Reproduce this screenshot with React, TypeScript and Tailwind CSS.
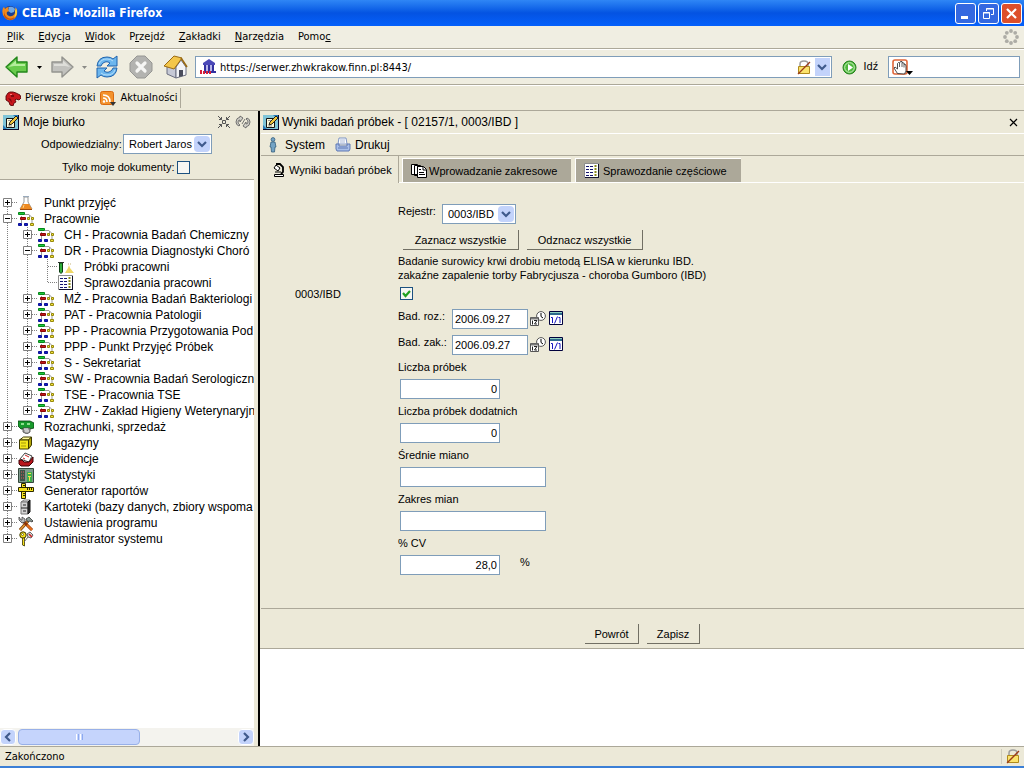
import { useState, type ReactNode } from "react";

interface TreeItem {
  label: string;
  icon: () => ReactNode;
  level: number;
  box?: "plus" | "minus";
  last?: boolean;
  first?: boolean;
}

/* ---------- window and toolbar icons ---------- */

function FirefoxIcon() {
  return (
    <svg width="16" height="16" viewBox="0 0 16 16" aria-hidden="true">
      <circle cx="8" cy="8" r="7" fill="#1c3f8f" />
      <path d="M7 2q4-1 6 2l-1 3-3 1-3-2z" fill="#6fa8e8" />
      <path d="M1 3Q-1 9 3 13q4 4 9 1 4-3 3-9-1-2-2-3 1 3 0 6-2 4-6 3-3-1-2-4l2-1-1-2 1-2Q4 2 3 4L2 2z" fill="#f08a1d" />
      <path d="M2 5q0 6 4 8 5 2 8-3-1 4-5 5-5 0-7-4z" fill="#c7500e" />
      <path d="M14 3q2 4 0 8l-2 2q2-4 1-7z" fill="#f9cf3a" />
    </svg>
  );
}

function ArrowIcon({ back }: { back?: boolean }) {
  return back ? (
    <svg width="24" height="22" viewBox="0 0 24 22" aria-hidden="true">
      <path d="M1 11 12 1v5h10v10H12v5z" fill="#69cb4c" stroke="#23871b" strokeWidth="1.4" strokeLinejoin="round" />
      <path d="M3.500 11 11 4.500V8h9v2H9z" fill="#b4ee9c" />
    </svg>
  ) : (
    <svg width="24" height="22" viewBox="0 0 24 22" aria-hidden="true">
      <path d="M23 11 12 1v5H2v10h10v5z" fill="#c2c2be" stroke="#94948f" strokeWidth="1.4" strokeLinejoin="round" />
      <path d="M20 11 13 4.500V8H4v2h11z" fill="#deded9" />
    </svg>
  );
}

function ReloadIcon() {
  return (
    <svg width="24" height="24" viewBox="0 0 24 24" aria-hidden="true">
      <path d="M2 11Q3 2 12 2q4 0 6 2l4-3v10H12l3-3q-4-3-8 1l-1 2z" fill="#6cb6ee" stroke="#1f63ad" strokeLinejoin="round" />
      <path d="M22 13q-1 9-10 9-4 0-6-2l-4 3V13h10l-3 3q4 3 8-1l1-2z" fill="#6cb6ee" stroke="#1f63ad" strokeLinejoin="round" />
      <path d="M4 9q2-5 8-5 4 0 6 2M20 15q-2 5-8 5-4 0-6-2" fill="none" stroke="#b5defa" />
    </svg>
  );
}

function StopIcon() {
  return (
    <svg width="24" height="24" viewBox="0 0 24 24" aria-hidden="true">
      <path d="M8 1h8l7 7v8l-7 7H8l-7-7V8z" fill="#b3b3b0" stroke="#969693" strokeLinejoin="round" />
      <path d="m8 8 8 8m0-8-8 8" stroke="#f6f6f4" strokeWidth="3.200" strokeLinecap="round" />
    </svg>
  );
}

function HomeIcon() {
  return (
    <svg width="25" height="24" viewBox="0 0 25 24" aria-hidden="true">
      <path d="M4 11v8l9 4V12L8 7z" fill="#c6c9d6" stroke="#6b6e80" />
      <path d="M13 23V12l5-7 5 7v8z" fill="#f3f4f8" stroke="#6b6e80" />
      <path d="M1 11 11 1l8 2-8 11z" fill="#f3c64a" stroke="#9a6a13" strokeLinejoin="round" />
      <path d="m18 3 6 9" stroke="#9a6a13" strokeWidth="1.600" />
      <path d="M16 15h4v6l-4 1z" fill="#4a4d5c" />
    </svg>
  );
}

function SiteIcon() {
  return (
    <svg width="16" height="16" viewBox="0 0 16 16" aria-hidden="true">
      <path d="M3 4 9 0l6 4v2H3z" fill="#4a48b8" />
      <path d="M4 6h2v7H4zM8 6h2v7H8zM12 6h2v7h-2z" fill="#3331a0" />
      <path d="M6 6h2v7H6zM10 6h2v7h-2z" fill="#b8b5ea" />
      <path d="M3 12h13v2H3z" fill="#3331a0" />
      <path d="M0 11h2v4H0zM3 12h2v3H3zM6 12h2v3H6zM9 12h2v3H9z" fill="#d8203a" />
    </svg>
  );
}

function LockIcon() {
  return (
    <svg width="14" height="15" viewBox="0 0 14 15" aria-hidden="true">
      <path d="M3 6V4q0-3 4-3t4 3v3" fill="none" stroke="#9c9c9c" strokeWidth="1.500" />
      <path d="M1.500 6.500h11v7h-11z" fill="#fbe36c" stroke="#b08a1c" />
      <path d="M1 14 13 2" stroke="#9c3a1a" strokeWidth="1.300" />
    </svg>
  );
}

function GoIcon() {
  return (
    <svg width="15" height="15" viewBox="0 0 15 15" aria-hidden="true">
      <circle cx="7.500" cy="7.500" r="6.500" fill="#4fb83c" stroke="#23801c" />
      <circle cx="7.500" cy="7.500" r="4.800" fill="none" stroke="#c9f0bd" />
      <path d="m6 4 5 3.500L6 11z" fill="#fff" />
    </svg>
  );
}

function HandIcon() {
  return (
    <svg width="21" height="17" viewBox="0 0 21 17" aria-hidden="true">
      <rect x="1" y="1" width="14" height="14" rx="2" fill="#fff" stroke="#e0673a" strokeWidth="1.600" />
      <path d="M5.500 14.500 2 9l1-1 2.500 2V4.500l1-1 1 .5 1-1.500 1.500 0 .5 1.500 1.500 0 .5 1.500 1 0 .5 1.500v5l-1.500 3z" fill="#fff" stroke="#222" strokeWidth=".8" />
      <path d="M7.500 4v4M10 3.500v4.500M12 5v3.500" stroke="#222" strokeWidth=".7" />
      <path d="M14 12h7l-3.500 4z" fill="#000" />
    </svg>
  );
}

function ThrobberIcon() {
  return (
    <svg width="16" height="16" viewBox="0 0 16 16" fill="#adaca6" aria-hidden="true">
      <circle cx="8" cy="2" r="1.900" />
      <circle cx="12.200" cy="3.800" r="1.900" />
      <circle cx="14" cy="8" r="1.900" />
      <circle cx="12.200" cy="12.200" r="1.900" />
      <circle cx="8" cy="14" r="1.900" />
      <circle cx="3.800" cy="12.200" r="1.900" />
      <circle cx="2" cy="8" r="1.900" />
      <circle cx="3.800" cy="3.800" r="1.900" />
    </svg>
  );
}

function DinoIcon() {
  return (
    <svg width="16" height="15" viewBox="0 0 16 15" aria-hidden="true">
      <path d="M1 5 3 2l2-1 3 0 3 1 4 2 1 3-2 2-3-1-1 1 1 2-2 1-1 3-3-1-1-3-3-2z" fill="#c8151b" stroke="#5a0508" strokeWidth=".9" />
      <path d="M6 4h3v2H6zM3 7l3 1 1 4" fill="#7d0a0e" />
      <path d="M5 3h2v1H5z" fill="#f77" />
    </svg>
  );
}

function FeedIcon() {
  return (
    <svg width="17" height="15" viewBox="0 0 17 15" aria-hidden="true">
      <rect x=".5" y=".5" width="13" height="13" rx="2" fill="#f3922c" stroke="#d9690f" />
      <path d="M3 7q4 0 4 4M3 4q7 0 7 7" fill="none" stroke="#fff" strokeWidth="1.600" />
      <circle cx="4" cy="10.500" r="1.200" fill="#fff" />
      <path d="M10 11h6l-3 4z" fill="#333" />
    </svg>
  );
}

function Caret({ muted }: { muted?: boolean }) {
  return (
    <svg width="5" height="3" viewBox="0 0 5 3" aria-hidden="true">
      <path d="M0 0h5L2.500 3z" fill={muted ? "#8a8a86" : "#000"} />
    </svg>
  );
}

function Chevron({ dir = "down" }: { dir?: "down" | "left" | "right" }) {
  const d = dir === "down" ? "m1 3 4 4 4-4" : dir === "left" ? "M7 1 3 5l4 4" : "m3 1 4 4-4 4";
  return (
    <svg width="10" height="10" viewBox="0 0 10 10" fill="none" aria-hidden="true">
      <path d={d} stroke="#3f5a8c" strokeWidth="2.200" />
    </svg>
  );
}

/* ---------- panel icons ---------- */

function NotepadIcon() {
  return (
    <svg width="16" height="16" viewBox="0 0 16 16" aria-hidden="true">
      <path d="M0 1h16v15H0z" fill="#7fc4d8" />
      <path d="M0 11v5h5zM10 1h6v5z" fill="#2478b8" />
      <path d="M15 1h1v15H0v-1h15z" fill="#0b0b2c" />
      <path d="M3.500 4.500h8v9h-8z" fill="#fdf8d8" stroke="#111" />
      <path d="M5 6.500h3M5 12h4" stroke="#999" />
      <path d="m6 11 1-3 6-6 2 2-6 6z" fill="#f2c63c" stroke="#111" strokeWidth=".9" />
    </svg>
  );
}

function CollapseIcon() {
  return (
    <svg width="14" height="14" viewBox="0 0 14 14" fill="none" stroke="#555" aria-hidden="true">
      <path d="M5.500 5.500h3v3h-3zM1 1l3.500 3.500M13 1 9.500 4.500M1 13l3.500-3.500M13 13 9.500 9.500" />
      <path d="M4.500 2v2.500H2M9.500 2v2.500H12M4.500 12V9.500H2M9.500 12V9.500H12" />
    </svg>
  );
}

function RefreshIcon() {
  return (
    <svg width="16" height="14" viewBox="0 0 16 14" fill="#d0cfc7" stroke="#666" strokeWidth=".9" aria-hidden="true">
      <path d="M8 3 5 1v1Q1 3 1 7q0 3 3 4l1-1Q3 9 3 7q0-2 2-2v2z" />
      <path d="m8 11 3 2v-1q4-1 4-5 0-3-3-4l-1 1q2 1 2 3 0 2-2 2V7z" />
      <path d="m7 9 3-5" />
    </svg>
  );
}

function PersonIcon() {
  return (
    <svg width="8" height="16" viewBox="0 0 8 16" fill="#74a3c4" stroke="#36607f" strokeWidth=".8" aria-hidden="true">
      <circle cx="4" cy="2.500" r="1.900" />
      <path d="M2 5h4l1 5H6l-.5 5h-3L2 10H1z" />
    </svg>
  );
}

function PrinterIcon() {
  return (
    <svg width="16" height="15" viewBox="0 0 16 15" aria-hidden="true">
      <path d="M4 1h7l1 6H3z" fill="#fff" stroke="#7d94c4" />
      <path d="M1 7h3v2h8V7h3v5l-1 2H2l-1-2z" fill="#a9bfe8" stroke="#5e79b4" />
      <path d="M3 11h10" stroke="#5e79b4" />
      <path d="M5 3h5M5 5h5" stroke="#a8b8d8" />
    </svg>
  );
}

function MicroscopeIcon() {
  return (
    <svg width="12" height="14" viewBox="0 0 12 14" aria-hidden="true">
      <path d="M1.500 11.500h9v2h-9z" fill="#fff" stroke="#000" />
      <path d="M3 1h4l3 3v5l-2 2" fill="none" stroke="#000" strokeWidth="1.800" />
      <path d="m3 2 4 3-2 3-4-3z" fill="#fff" stroke="#000" />
      <path d="M2 9h6" stroke="#000" />
    </svg>
  );
}

function PagesIcon() {
  return (
    <svg width="16" height="14" viewBox="0 0 16 14" fill="#fff" stroke="#000" aria-hidden="true">
      <path d="M.500.500h6v10h-6zM3.500 1.500h6v10h-6z" />
      <path d="M6.500 2.500h6l3 3v8h-9z" />
      <path d="M12 3v3h3M8 8.500h5M8 10.500h6M8 5.500h2" fill="none" />
    </svg>
  );
}

function SheetIcon() {
  return (
    <svg width="16" height="16" viewBox="0 0 16 16" aria-hidden="true">
      <path d="M.500.500h14v14H.500z" fill="#fff" stroke="#8d8d8d" />
      <path d="M14 1h1v14H1v-1h13z" fill="#14142c" />
      <path d="M2 3.500h3M6 3.500h3M2 6.500h3M6 6.500h3M2 9.500h3M6 9.500h3M2 12.500h3M6 12.500h3" stroke="#15156e" />
      <path d="M11.500 2v12" stroke="#8a8a1a" strokeWidth="2" strokeDasharray="2 1" />
    </svg>
  );
}

function TimeIcon() {
  return (
    <svg width="16" height="15" viewBox="0 0 16 15" aria-hidden="true">
      <circle cx="11" cy="5" r="4.400" fill="#fff" stroke="#555" />
      <path d="M11 2v3.500l2 1.500" fill="none" stroke="#000" />
      <path d="M.500 6.500h8v8h-8z" fill="#fff" stroke="#555" />
      <path d="M1 7.500h7" stroke="#777" strokeWidth="2" />
      <path d="M2.500 9.500v4M4 9.500h3l-2.500 3.500H7" fill="none" stroke="#222" />
    </svg>
  );
}

function CalendarIcon() {
  return (
    <svg width="14" height="14" viewBox="0 0 14 14" aria-hidden="true">
      <path d="M.500.500h13v13H.500z" fill="#fff" stroke="#00003c" />
      <path d="M1 1h12v3H1z" fill="#2d6a8c" />
      <path d="M1 1.500h12" stroke="#8fd0c0" />
      <path d="M2 6.500h1.500V12M9.500 6.500H11V12M8.500 5.500 5.500 12.500" fill="none" stroke="#1616c0" />
    </svg>
  );
}

/* ---------- tree icons ---------- */

function FlaskIcon() {
  return (
    <svg width="16" height="16" viewBox="0 0 16 16" aria-hidden="true">
      <path d="M6 2v5l-4 7h12l-4-7V2z" fill="#fff" stroke="#9a9a9a" />
      <path d="m5 9-3 5h12l-3-5z" fill="#ee8a22" />
      <path d="M2 14.500h12" stroke="#a04c0c" />
      <path d="M5 1.500h6" stroke="#9ab" />
      <path d="m6 10-1 3" stroke="#ffd48a" />
    </svg>
  );
}

function LabsIcon() {
  return (
    <svg width="16" height="14" viewBox="0 0 16 14" aria-hidden="true">
      <path d="M3.500 4v7M7 2.500h4l3 3v6M11.500 3v3" fill="none" stroke="#999" />
      <path d="M.500.500h6v2h-6z" fill="#1fc83c" stroke="#06871a" />
      <path d="M2.500 5.500h5v2h-5z" fill="#c01818" stroke="#8a0606" />
      <path d="M.500 11.500h3v2h-3zM6.500 11.500h3v2h-3z" fill="#1420c0" stroke="#0a0f98" />
      <path d="M9.500 5.500h2v2h-2zM13.500 5.500h2v2h-2zM12.500 11.500h3v2h-3z" fill="#f2e23c" stroke="#96880c" />
    </svg>
  );
}

function TubesIcon() {
  return (
    <svg width="16" height="13" viewBox="0 0 16 13" aria-hidden="true">
      <path d="M0 1.500h6" stroke="#333" />
      <path d="M1.500 2h3v9L3 12.500 1.500 11z" fill="#2fae3a" stroke="#0a3c10" />
      <path d="m11 4 1 3 4 5H7l3-5z" fill="#efd766" />
      <path d="M10 3h3" stroke="#c7b57a" strokeDasharray="1 1" />
    </svg>
  );
}

function MoneyIcon() {
  return (
    <svg width="16" height="14" viewBox="0 0 16 14" aria-hidden="true">
      <path d="M0 1h12l4 2v5l-4 1H3L0 6z" fill="#189a2c" stroke="#063c10" strokeWidth=".8" />
      <path d="M3 3h3v2H3zM9 3h3v2H9z" fill="#8ee08e" />
      <path d="M5 8h7v4l-3 2-4-2z" fill="#a5a5a5" stroke="#444" strokeWidth=".8" />
      <path d="M6 9h4M7 11h4" stroke="#f0f0f0" />
    </svg>
  );
}

function BoxIcon() {
  return (
    <svg width="16" height="14" viewBox="0 0 16 14" strokeLinejoin="round" stroke="#3d3a00" aria-hidden="true">
      <path d="m1.500 4 4-3h8l-3 3z" fill="#fff99a" />
      <path d="M1.500 4h9v9h-9z" fill="#f4e61c" />
      <path d="m10.500 4 3-3v8l-3 4z" fill="#b5a608" />
      <path d="M3 7h5M3 10h5" stroke="#a69806" />
    </svg>
  );
}

function RecordsIcon() {
  return (
    <svg width="16" height="15" viewBox="0 0 16 15" strokeLinejoin="round" aria-hidden="true">
      <path d="m2 7 5-6 7 3-3 6z" fill="#fff" stroke="#444" />
      <path d="m5 6 2 1m0-4 4 2" stroke="#c22" />
      <path d="m1 8 3 0 2 2h5l4-5v5l-4 4H3L1 12z" fill="#b8161c" stroke="#3c0306" />
    </svg>
  );
}

function StatsIcon() {
  return (
    <svg width="16" height="15" viewBox="0 0 16 15" aria-hidden="true">
      <path d="M.500.500h15v14H.500z" fill="#7e9a8c" stroke="#33483c" />
      <path d="M2 2h5v11H2z" fill="#3c5448" />
      <path d="M9 4h5v10H9z" fill="#3fae4c" />
      <path d="M3 4h1M5 4h1M3 7h1M5 7h1M3 10h1M5 10h1" stroke="#e05a5a" />
      <path d="M10 5.500h3M10 8.500h3M11.500 9v4" stroke="#f5e04c" />
    </svg>
  );
}

function RulerIcon() {
  return (
    <svg width="16" height="16" viewBox="0 0 16 16" aria-hidden="true">
      <path d="M3.500.500h4v15h-4z" fill="#f6e21c" stroke="#2b2800" />
      <path d="M.500 4.500h15v4H.500z" fill="#f6e21c" stroke="#2b2800" />
      <path d="M5 2.500h2M5 10.500h2M5 12.500h2M9.500 5v2M11.500 5v2M13.500 5v2" stroke="#2b2800" />
    </svg>
  );
}

function CabinetIcon() {
  return (
    <svg width="16" height="16" viewBox="0 0 16 16" strokeLinejoin="round" aria-hidden="true">
      <path d="m3 3 3-2h6l-2 2z" fill="#f2f2f2" stroke="#777" />
      <path d="M3 3h7v12H3z" fill="#d4d4d4" stroke="#777" />
      <path d="m10 3 2-2v12l-2 2z" fill="#333" stroke="#111" />
      <path d="M3 9h7M5 6h3M5 12h3" stroke="#222" />
    </svg>
  );
}

function ToolsIcon() {
  return (
    <svg width="16" height="15" viewBox="0 0 16 15" aria-hidden="true">
      <path d="m2 14 8-9" stroke="#7a3d08" strokeWidth="3" />
      <path d="m2 14 8-9" stroke="#e59a34" strokeWidth="1.500" />
      <path d="m5 5 9 9" stroke="#8c3408" strokeWidth="3" />
      <path d="m9 9 5 5" stroke="#e8701c" strokeWidth="1.800" />
      <path d="M1 1v3l3 3 3-1V3L4 1v3H3z" fill="#bcbcbc" stroke="#444" strokeWidth=".8" />
      <path d="m8 3 3-2 4 4-1 1-2-1-2 1z" fill="#8c9a94" stroke="#333" strokeWidth=".8" />
    </svg>
  );
}

function KeysIcon() {
  return (
    <svg width="16" height="16" viewBox="0 0 16 16" aria-hidden="true">
      <circle cx="5" cy="4" r="3.200" fill="#f6e21c" stroke="#3c3600" />
      <circle cx="4.500" cy="3.500" r="1" fill="#fff" stroke="#3c3600" strokeWidth=".6" />
      <path d="M4.500 7h2v8l-2-1z" fill="#f6e21c" stroke="#3c3600" strokeWidth=".8" />
      <path d="m9 3 3-2 3 3-2 3-3-1z" fill="#d8d8d8" stroke="#444" strokeWidth=".8" />
      <path d="m11 3 3 3" stroke="#c22" strokeWidth="1.500" />
      <path d="m10 6-4 5" stroke="#666" />
    </svg>
  );
}

const TREE: TreeItem[] = [
  { label: "Punkt przyjęć", icon: FlaskIcon, level: 0, box: "plus", first: true },
  { label: "Pracownie", icon: LabsIcon, level: 0, box: "minus" },
  { label: "CH - Pracownia Badań Chemiczny", icon: LabsIcon, level: 1, box: "plus" },
  { label: "DR - Pracownia Diagnostyki Choró", icon: LabsIcon, level: 1, box: "minus" },
  { label: "Próbki pracowni", icon: TubesIcon, level: 2 },
  { label: "Sprawozdania pracowni", icon: SheetIcon, level: 2, last: true },
  { label: "MŻ - Pracownia Badań Bakteriologi", icon: LabsIcon, level: 1, box: "plus" },
  { label: "PAT - Pracownia Patologii", icon: LabsIcon, level: 1, box: "plus" },
  { label: "PP - Pracownia Przygotowania Pod", icon: LabsIcon, level: 1, box: "plus" },
  { label: "PPP - Punkt Przyjęć Próbek", icon: LabsIcon, level: 1, box: "plus" },
  { label: "S - Sekretariat", icon: LabsIcon, level: 1, box: "plus" },
  { label: "SW - Pracownia Badań Serologiczn", icon: LabsIcon, level: 1, box: "plus" },
  { label: "TSE - Pracownia TSE", icon: LabsIcon, level: 1, box: "plus" },
  { label: "ZHW - Zakład Higieny Weterynaryjn", icon: LabsIcon, level: 1, box: "plus", last: true },
  { label: "Rozrachunki, sprzedaż", icon: MoneyIcon, level: 0, box: "plus" },
  { label: "Magazyny", icon: BoxIcon, level: 0, box: "plus" },
  { label: "Ewidencje", icon: RecordsIcon, level: 0, box: "plus" },
  { label: "Statystyki", icon: StatsIcon, level: 0, box: "plus" },
  { label: "Generator raportów", icon: RulerIcon, level: 0, box: "plus" },
  { label: "Kartoteki (bazy danych, zbiory wspoma", icon: CabinetIcon, level: 0, box: "plus" },
  { label: "Ustawienia programu", icon: ToolsIcon, level: 0, box: "plus" },
  { label: "Administrator systemu", icon: KeysIcon, level: 0, box: "plus", last: true },
];

function TreeGuide() {
  return (
    <svg width="20" height="16" viewBox="0 0 20 16" className="shrink-0" aria-hidden="true">
      <path d="M7.500 0v16" stroke="#808080" strokeDasharray="1 1" />
    </svg>
  );
}

function TreeJoint({ item }: { item: TreeItem }) {
  const top = item.first ? 8 : 0;
  const bottom = item.last ? 8 : 16;
  return (
    <svg width="18" height="16" viewBox="0 0 18 16" className="shrink-0" aria-hidden="true">
      <path d={`M7.500 ${top}V${bottom}M8 7.500h9`} stroke="#808080" strokeDasharray="1 1" fill="none" />
      {item.box && (
        <>
          <path d="M3.500 3.500h8v8h-8z" fill="#fff" stroke="#808080" />
          <path d={item.box === "plus" ? "M5 7.500h5M7.500 5v5" : "M5 7.500h5"} stroke="#000" fill="none" />
        </>
      )}
    </svg>
  );
}

function TreeRow({ item }: { item: TreeItem }) {
  const Icon = item.icon;
  return (
    <li className="flex h-4 items-center whitespace-nowrap">
      {item.level > 0 && <TreeGuide />}
      {item.level > 1 && <TreeGuide />}
      <TreeJoint item={item} />
      <span className="flex w-4 shrink-0 items-center justify-center">
        <Icon />
      </span>
      <a href="#" className="ml-2.5 text-[12px] leading-4">
        {item.label}
      </a>
    </li>
  );
}

/* ---------- shared controls ---------- */

function XpSelect({ id, value, className }: { id: string; value: string; className: string }) {
  return (
    <div className={`relative h-5 ${className}`}>
      <select id={id} className="h-full w-full appearance-none border border-[#7f9db9] bg-white pl-[5px] text-[11px] leading-4">
        <option>{value}</option>
      </select>
      <span className="pointer-events-none absolute top-0.5 right-0.5 flex size-4 items-center justify-center rounded-sm bg-[#c3d3fb]">
        <Chevron />
      </span>
    </div>
  );
}

function XpCheckbox({ id, checked }: { id: string; checked?: boolean }) {
  const [on, setOn] = useState(Boolean(checked));
  return (
    <span className="relative block size-[13px]">
      <input
        id={id}
        type="checkbox"
        checked={on}
        onChange={() => setOn(!on)}
        className="block size-full appearance-none border border-[#1c5180] bg-[#f6f6f2]"
      />
      {on && (
        <svg width="13" height="13" viewBox="0 0 13 13" className="pointer-events-none absolute inset-0" aria-hidden="true">
          <path d="m3 6 2.500 3L10 4" fill="none" stroke="#21a121" strokeWidth="2.200" />
        </svg>
      )}
    </span>
  );
}

function PushButton({ children, className }: { children: ReactNode; className: string }) {
  return (
    <button type="button" className={`h-5 border-r border-b border-[#716f64] text-center text-[11px] leading-4 ${className}`}>
      {children}
    </button>
  );
}

function DateField({ id, label, value }: { id: string; label: string; value: string }) {
  return (
    <div className="flex h-5 items-start">
      <label htmlFor={id} className="w-[54px] leading-[14px]">{label}</label>
      <input id={id} defaultValue={value} className="h-5 w-[76px] border border-[#7f9db9] bg-white px-0.5" />
      <button type="button" aria-label="Czas" className="mt-0.5 ml-0.5"><TimeIcon /></button>
      <button type="button" aria-label="Kalendarz" className="mt-0.5 ml-[3px]"><CalendarIcon /></button>
    </div>
  );
}

function StackField({ id, label, value, wide, unit }: { id: string; label: string; value?: string; wide?: boolean; unit?: string }) {
  return (
    <div>
      <label htmlFor={id} className="block leading-[14px]">{label}</label>
      <div className="mt-[5px] ml-0.5 flex items-start">
        <input
          id={id}
          defaultValue={value}
          className={`h-5 border border-[#7f9db9] bg-white px-0.5 ${wide ? "w-[146px]" : "w-[100px] text-right"}`}
        />
        {unit && <span className="ml-5 leading-[14px]">{unit}</span>}
      </div>
    </div>
  );
}

/* ---------- browser window ---------- */

const MENU = [
  ["", "P", "lik"],
  ["", "E", "dycja"],
  ["", "W", "idok"],
  ["P", "r", "zejdź"],
  ["", "Z", "akładki"],
  ["", "N", "arzędzia"],
  ["Pomo", "c", ""],
];

function TitleBar() {
  const button = "flex size-[21px] items-center justify-center rounded-[3px] border border-white";
  return (
    <header className="flex h-[26px] items-center bg-linear-to-b from-[#2f86f5] via-[#0453e2] to-[#0560fb] pr-0.5 pl-0.5">
      <FirefoxIcon />
      <h1 className="ml-1 flex-1 font-['DejaVu_Sans_Condensed','Noto_Sans',sans-serif] text-[12px] font-bold text-white">
        CELAB - Mozilla Firefox
      </h1>
      <div className="flex gap-0.5">
        <button type="button" aria-label="Minimalizuj" className={`${button} bg-[#3468e0]`}>
          <svg width="13" height="13" viewBox="0 0 13 13"><path d="M2 9h7v3H2z" fill="#fff" /></svg>
        </button>
        <button type="button" aria-label="Przywróć" className={`${button} bg-[#3468e0]`}>
          <svg width="13" height="13" viewBox="0 0 13 13" fill="none" stroke="#fff">
            <path d="M4.500 4V1.500h7v6H9M4 2h8M1.500 5.500h6v6h-6zM1 6h7" />
          </svg>
        </button>
        <button type="button" aria-label="Zamknij" className={`${button} bg-[#dd4f2b]`}>
          <svg width="13" height="13" viewBox="0 0 13 13"><path d="m2 2 9 9m0-9-9 9" stroke="#fff" strokeWidth="2.200" /></svg>
        </button>
      </div>
    </header>
  );
}

function BrowserChrome() {
  return (
    <div className="bg-[#ece9d8]">
      <nav className="flex h-[23px] items-center gap-3.5 border-b border-[#aca899] bg-[#f0eee2] pr-[5px] pl-[7px]">
        {MENU.map(([before, key, after]) => (
          <button type="button" key={before + key + after}>
            {before}
            <u>{key}</u>
            {after}
          </button>
        ))}
        <span className="ml-auto"><ThrobberIcon /></span>
      </nav>

      <div className="flex h-9 items-center border-t border-b border-t-white border-b-[#aca899] bg-[#efede0] pr-1 pl-[5px]">
        <button type="button" aria-label="Wstecz"><ArrowIcon back /></button>
        <button type="button" aria-label="Historia wstecz" className="ml-2"><Caret /></button>
        <button type="button" aria-label="Dalej" className="ml-2"><ArrowIcon /></button>
        <button type="button" aria-label="Historia dalej" className="ml-2"><Caret muted /></button>
        <button type="button" aria-label="Odśwież" className="ml-2"><ReloadIcon /></button>
        <button type="button" aria-label="Zatrzymaj" className="ml-2.5"><StopIcon /></button>
        <button type="button" aria-label="Strona startowa" className="ml-2.5"><HomeIcon /></button>
        <div className="ml-[7px] flex h-[22px] flex-1 items-center border border-[#7f9db9] bg-white pr-px pl-1">
          <SiteIcon />
          <input aria-label="Adres" defaultValue="https://serwer.zhwkrakow.finn.pl:8443/" className="ml-1 h-full flex-1 outline-none" />
          <LockIcon />
          <button type="button" aria-label="Lista adresów" className="ml-1 flex h-[18px] w-[15px] items-center justify-center bg-[#c3d3fb]">
            <Chevron />
          </button>
        </div>
        <button type="button" className="ml-2.5 flex items-center gap-[7px]">
          <GoIcon />
          Idź
        </button>
        <div className="ml-2.5 flex h-[22px] w-[132px] items-center border border-[#7f9db9] bg-white pl-[3px]">
          <HandIcon />
          <input aria-label="Szukaj" className="h-full min-w-0 flex-1 outline-none" />
        </div>
      </div>

      <div className="flex h-[26px] items-center border-t border-b border-t-white border-b-[#aca899] pl-[5px]">
        <a href="#" className="flex items-center gap-1"><DinoIcon />Pierwsze kroki</a>
        <a href="#" className="ml-[5px] flex items-center gap-[3px]"><FeedIcon />Aktualności</a>
        <span className="ml-0.5 h-5 w-px bg-[#aca899]" />
      </div>
    </div>
  );
}

function DeskPanel() {
  return (
    <aside className="flex w-[254px] shrink-0 flex-col overflow-hidden bg-white">
      <div className="border-b border-[#aca899] bg-[#ece9d8]">
        <div className="flex h-[22px] items-center pr-[3px] pl-[3px]">
          <NotepadIcon />
          <h2 className="ml-1 flex-1 text-[12px]">Moje biurko</h2>
          <button type="button" aria-label="Zwiń"><CollapseIcon /></button>
          <button type="button" aria-label="Odśwież" className="ml-1"><RefreshIcon /></button>
        </div>
        <div className="flex h-[22px] items-center pl-[41px] text-[11px]">
          <label htmlFor="person" className="w-[82px] whitespace-nowrap">Odpowiedzialny:</label>
          <XpSelect id="person" value="Robert Jaros" className="w-[89px]" />
        </div>
        <div className="flex h-6 items-center pl-[62px] text-[11px]">
          <label htmlFor="mine" className="w-[115px] whitespace-nowrap">Tylko moje dokumenty:</label>
          <XpCheckbox id="mine" />
        </div>
      </div>
      <ul className="flex-1 pt-[15px]">
        {TREE.map((item) => (
          <TreeRow key={item.label} item={item} />
        ))}
      </ul>
      <div className="flex h-[18px] items-center gap-0.5 bg-[#f4f3ee]">
        <button type="button" aria-label="W lewo" className="flex size-4 items-center justify-center rounded-sm border border-white bg-[#c3d3fb]">
          <Chevron dir="left" />
        </button>
        <div className="flex h-4 w-[122px] items-center justify-center gap-px rounded-sm border border-[#98b0e8] bg-[#c5d4fc]">
          <span className="h-1.5 w-px bg-white" />
          <span className="h-1.5 w-px bg-[#8caaf0]" />
          <span className="h-1.5 w-px bg-white" />
          <span className="h-1.5 w-px bg-[#8caaf0]" />
        </div>
        <button type="button" aria-label="W prawo" className="ml-auto flex size-4 items-center justify-center rounded-sm border border-white bg-[#c3d3fb]">
          <Chevron dir="right" />
        </button>
      </div>
    </aside>
  );
}

function ResultsForm() {
  return (
    <form className="pt-[21px] pb-[33px] pl-[34px] text-[11px]">
      <div className="pl-[103px]">
        <div className="flex items-start">
          <label htmlFor="register" className="w-11 leading-[14px]">Rejestr:</label>
          <XpSelect id="register" value="0003/IBD" className="w-[74px]" />
        </div>
        <div className="mt-1.5 ml-[5px] flex gap-2">
          <PushButton className="w-[116px]">Zaznacz wszystkie</PushButton>
          <PushButton className="w-[116px]">Odznacz wszystkie</PushButton>
        </div>
        <p className="mt-1 leading-[14px]">
          Badanie surowicy krwi drobiu metodą ELISA w kierunku IBD.
          <br />
          zakaźne zapalenie torby Fabrycjusza - choroba Gumboro (IBD)
        </p>
      </div>
      <div className="mt-[5px] flex h-[13px] items-center">
        <label htmlFor="ibd" className="w-[105px]">0003/IBD</label>
        <XpCheckbox id="ibd" checked />
      </div>
      <div className="pl-[103px]">
        <div className="mt-[9px] flex flex-col gap-1.5">
          <DateField id="start" label="Bad. roz.:" value="2006.09.27" />
          <DateField id="end" label="Bad. zak.:" value="2006.09.27" />
        </div>
        <div className="mt-[5px] flex flex-col gap-[5px]">
          <StackField id="count" label="Liczba próbek" value="0" />
          <StackField id="positive" label="Liczba próbek dodatnich" value="0" />
          <StackField id="mean" label="Średnie miano" wide />
          <StackField id="range" label="Zakres mian" wide />
          <StackField id="cv" label="% CV" value="28,0" unit="%" />
        </div>
      </div>
    </form>
  );
}

function ResultsPanel() {
  const grayTab = "flex h-6 items-center border-t border-l border-white bg-[#aca899] pl-2";
  return (
    <main className="min-w-0 flex-1 bg-white">
      <div className="border-b border-[#aca899] bg-[#ece9d8] pl-px">
        <div className="flex h-[23px] items-center border-b border-white pr-1.5 pl-0.5">
          <NotepadIcon />
          <h2 className="ml-[3px] flex-1 text-[12px]">Wyniki badań próbek - [ 02157/1, 0003/IBD ]</h2>
          <button type="button" aria-label="Zamknij">
            <svg width="9" height="9" viewBox="0 0 9 9"><path d="m1 1 7 7m0-7L1 8" stroke="#000" strokeWidth="1.200" /></svg>
          </button>
        </div>
        <div className="flex h-[22px] items-center border-b border-[#aca899] pl-2 text-[12px]">
          <button type="button" className="flex items-center gap-2"><PersonIcon />System</button>
          <button type="button" className="ml-2.5 flex items-center gap-1"><PrinterIcon />Drukuj</button>
        </div>
        <div className="flex h-[27px] items-end text-[11px]" role="tablist">
          <button type="button" role="tab" aria-selected="true" className="flex h-[27px] w-[138px] items-center gap-1 border-r border-[#aca899] pl-3 whitespace-nowrap">
            <MicroscopeIcon />
            Wyniki badań próbek
          </button>
          <div className="flex flex-1 gap-1 border-b border-white pl-[3px]">
            <button type="button" role="tab" aria-selected="false" className={`${grayTab} w-[169px] gap-0.5`}>
              <PagesIcon />
              Wprowadzanie zakresowe
            </button>
            <button type="button" role="tab" aria-selected="false" className={`${grayTab} w-[166px] gap-[3px]`}>
              <SheetIcon />
              Sprawozdanie częściowe
            </button>
          </div>
        </div>
        <ResultsForm />
        <div className="flex h-10 items-start justify-center gap-2 border-t border-[#aca899] pt-[15px]">
          <PushButton className="w-[54px]">Powrót</PushButton>
          <PushButton className="w-[53px]">Zapisz</PushButton>
        </div>
      </div>
    </main>
  );
}

export default function App() {
  return (
    <div className="flex min-h-screen flex-col bg-white font-['DejaVu_Sans_Condensed','Noto_Sans',sans-serif] text-[11px] leading-4 text-black">
      <TitleBar />
      <BrowserChrome />
      <div className="flex flex-1 font-['Liberation_Sans',Arial,sans-serif]">
        <DeskPanel />
        <div className="w-1.5 shrink-0 border-r-2 border-black bg-[#ece9d8]" />
        <ResultsPanel />
      </div>
      <footer className="flex h-[22px] items-center border-t border-b-2 border-t-[#aca899] border-b-[#3b7fd6] bg-[#ece9d8] pr-1 pl-[5px]">
        <span className="flex-1">Zakończono</span>
        <span className="border-l border-[#d0cdbd] pl-1"><LockIcon /></span>
      </footer>
    </div>
  );
}
